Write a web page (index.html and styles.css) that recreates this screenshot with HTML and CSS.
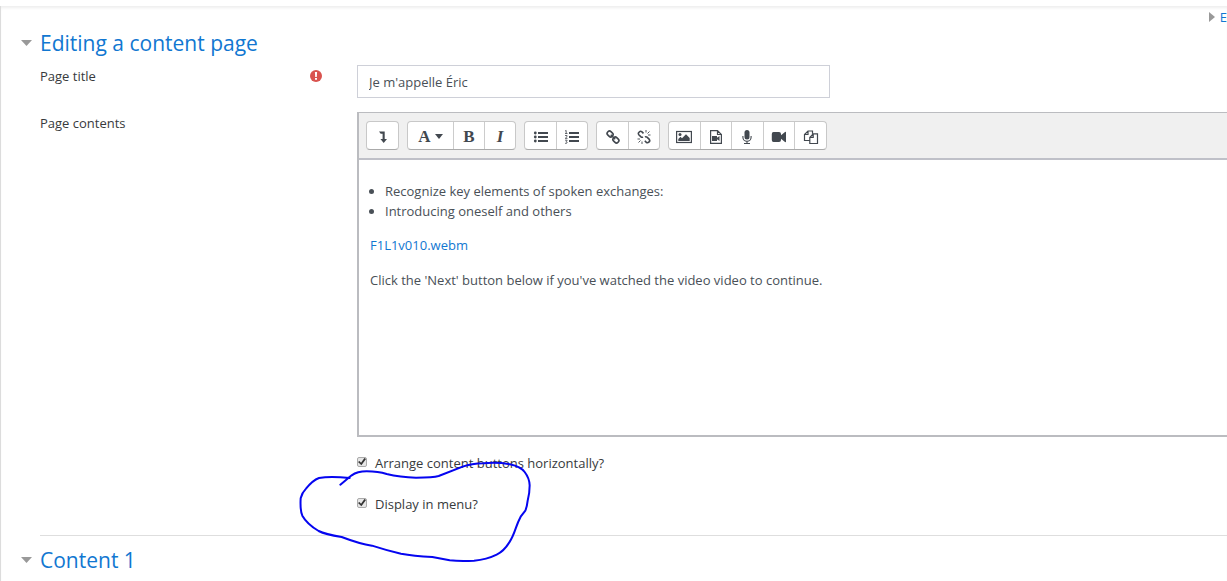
FILE: index.html
```html
<!DOCTYPE html>
<html lang="en">
<head>
<meta charset="utf-8">
<title>Editing a content page</title>
<link rel="stylesheet" href="styles.css">
</head>
<body>
<main class="page">
  <div class="expand"><span class="caret-right"></span><a href="#">E</a></div>
  <form>
    <section class="section">
      <h3 class="legend"><span class="caret-down"></span><a href="#">Editing a content page</a></h3>
      <div class="row">
        <div class="row-label"><label for="title">Page title</label>
          <svg class="required" viewBox="0 0 12 12"><circle cx="6" cy="6" r="6" fill="#d9534f"/><path d="M4.9 2h2.2l-.3 5H5.2zM5 7.9h2v1.9H5z" fill="#fff"/></svg>
        </div>
        <input class="text-input" id="title" type="text" value="Je m'appelle Éric">
      </div>
      <div class="row">
        <div class="row-label">Page contents</div>
        <div class="editor">
          <div class="toolbar">
            <div class="group">
              <button type="button" aria-label="Show more buttons"><svg width="16" height="16" viewBox="0 0 16 16"><path d="M4 2.500H9.700V10H12L8.700 14L5.400 10H7.600V4.700H5.700z" fill="currentColor"/></svg></button>
            </div>
            <div class="group">
              <button type="button" class="styles"><span class="serif">A</span><span class="caret-menu"></span></button>
              <button type="button"><span class="serif">B</span></button>
              <button type="button"><span class="serif italic">I</span></button>
            </div>
            <div class="group">
              <button type="button" aria-label="Unordered list"><svg width="16" height="16" viewBox="0 0 16 16" fill="currentColor"><path d="M5 3h10v2H5zM5 7h10v2H5zM5 11h10v2H5z"/><circle cx="2.300" cy="4" r="1.400"/><circle cx="2.300" cy="8" r="1.400"/><circle cx="2.300" cy="12" r="1.400"/></svg></button>
              <button type="button" aria-label="Ordered list"><svg width="16" height="16" viewBox="0 0 16 16"><path d="M5 3h10v2H5zM5 7h10v2H5zM5 11h10v2H5z" fill="currentColor"/><path d="M1 2L2.200 1.500V4.500M1 4.500H3.500M1 6.500H3V7.700L1.200 9.400H3.500M1 11.200H3.200L2.200 12.500Q3.500 12.700 3 14Q2.300 14.700 1 14.200" fill="none" stroke="currentColor" stroke-width=".8"/></svg></button>
            </div>
            <div class="group">
              <button type="button" aria-label="Link"><svg width="16" height="16" viewBox="0 0 16 16" fill="none" stroke="currentColor" stroke-width="1.600"><rect x="2" y="2.700" width="6.200" height="4.600" rx="2" transform="rotate(45 5.100 5)"/><rect x="7.800" y="8.700" width="6.200" height="4.600" rx="2" transform="rotate(45 10.900 11)"/><path d="M5.800 5.800L10.200 10.200"/></svg></button>
              <button type="button" aria-label="Unlink"><svg width="16" height="16" viewBox="0 0 16 16" fill="none" stroke="currentColor" stroke-width="1.600"><path d="M7.500 4.300L5.700 2.600Q4.500 1.800 3.400 2.800Q1.600 4.300 2.800 5.700L5 7.900Q5.900 8.600 7 8M8.800 11.800L10.500 13.500Q11.700 14.200 12.800 13.200Q14.400 11.800 13.300 10.400L11 8.200Q10 7.400 9 8"/><path d="M10 1v2.500M11.500 4.500l2-2M12 6h2.500M1.500 10H4M2.500 13.500l2-2M6 12.500V15" stroke-width=".9"/></svg></button>
            </div>
            <div class="group wide">
              <button type="button" aria-label="Image"><svg width="16" height="16" viewBox="0 0 16 16"><rect x=".6" y="2.500" width="14.800" height="11" fill="none" stroke="currentColor" stroke-width="1.200"/><circle cx="4" cy="5.500" r="1.500" fill="currentColor"/><path d="M2.300 12V10L4.500 7.800L6 9.300L10 5.300L13.700 9V12z" fill="currentColor"/></svg></button>
              <button type="button" aria-label="Media"><svg width="16" height="16" viewBox="0 0 16 16"><path d="M2.600 1.600H9.500L13.400 5.500V14.400H2.600zM9.500 1.600V5.500H13.400" fill="none" stroke="currentColor" stroke-width="1.200"/><path d="M4 7h5v1.700L11.500 7v5L9 10.300V12H4z" fill="currentColor"/></svg></button>
              <button type="button" aria-label="Record audio"><svg width="16" height="16" viewBox="0 0 16 16"><rect x="5.500" y="1" width="5" height="9.500" rx="2.500" fill="currentColor"/><path d="M3.900 7V8.200A4.100 4.100 0 0 0 12.100 8.200V7M8 12.300V14.500M5 14.500H11" fill="none" stroke="currentColor" stroke-width="1.100"/></svg></button>
              <button type="button" aria-label="Record video"><svg width="16" height="16" viewBox="0 0 16 16" fill="currentColor"><path d="M2.500 3H8Q10 3 10 5V6.300L14 3Q15 2.500 15 3.500V12.500Q15 13.500 14 13L10 9.700V11Q10 13 8 13H2.500Q.8 13 .8 11V5Q.8 3 2.500 3z"/></svg></button>
              <button type="button" aria-label="Manage files"><svg width="16" height="16" viewBox="0 0 16 16" fill="none" stroke="currentColor" stroke-width="1.200"><path d="M6.500 11.500H1.500V5.500L5 2H9.500V4.800M1.500 5.500H5V2M6.800 8.300L10.200 4.800H14.500V14.500H6.800zM6.800 8.300H10.200V4.800"/></svg></button>
            </div>
          </div>
          <div class="content" contenteditable="true" spellcheck="false">
            <ul>
              <li>Recognize key elements of spoken exchanges:</li>
              <li>Introducing oneself and others</li>
            </ul>
            <p><a href="#">F1L1v010.webm</a></p>
            <p>Click the 'Next' button below if you've watched the video video to continue.</p>
          </div>
        </div>
      </div>
      <div class="checks">
        <label><input type="checkbox" checked>Arrange content buttons horizontally?</label>
        <label><input type="checkbox" checked>Display in menu?</label>
        <svg class="ink" viewBox="0 0 1020 483" fill="none" stroke="#0505f0" stroke-width="6" stroke-linecap="round" stroke-linejoin="round"><path d="M151 194L185 166Q202 154 230 154Q265 154 290 162Q330 172 378 173Q430 173 446 168L518 140Q545 131 580 130Q620 126 660 133Q692 140 704 156Q718 174 719 196Q719 220 713 242Q711 260 706 272L692 290Q684 305 678 323Q668 352 658 367Q642 393 620 404Q590 419 552 422Q510 424 479 421L427 411Q370 408 333 401Q285 390 246 377Q210 372 155 351Q105 343 86 333Q51 312 37 287Q30 271 32 235Q36 218 48 206Q68 181 87 174Q120 168 179 174"/></svg>
      </div>
    </section>
    <section class="section">
      <h3 class="legend"><span class="caret-down"></span><a href="#">Content 1</a></h3>
    </section>
  </form>
</main>
</body>
</html>
```
FILE: styles.css
```css
* { box-sizing: border-box; }

body {
  margin: 0;
  padding-top: 6px;
  background: #fff;
  color: #373a3c;
  font: 13px/20px "Open Sans", "Noto Sans", sans-serif;
  overflow: hidden;
}

a { color: #1177d1; text-decoration: none; }

.page {
  min-height: calc(100vh - 6px);
  padding-left: 39px;
  border-left: 1px solid #dcdcdc;
  box-shadow: inset 0 3px 3px -1px #eee;
}

.expand {
  display: flex;
  justify-content: flex-end;
  align-items: center;
  gap: 5px;
  height: 22px;
}

.caret-right {
  border: 5px solid transparent;
  border-left: 6px solid #999;
  border-right: 0;
}

.caret-down {
  width: 11px;
  height: 6px;
  margin-left: -19px;
  margin-right: 8px;
  background: #999;
  clip-path: polygon(0 0, 100% 0, 50% 100%);
}

.legend {
  display: flex;
  align-items: center;
  margin: 0 0 7px;
  font-size: 21px;
  line-height: 30px;
  font-weight: 400;
}

.row {
  display: grid;
  grid-template-columns: 317px 1fr;
  margin-bottom: 14px;
}

.row-label {
  display: flex;
  justify-content: space-between;
  align-items: flex-start;
  padding: 1px 35px 0 0;
}

.required { width: 12px; height: 12px; margin-top: 4px; }

.text-input {
  width: 473px;
  max-width: 100%;
  height: 33px;
  padding: 0 11px;
  border: 1px solid #ced0d8;
  background: #fff;
  color: #495057;
  font: inherit;
}

.editor {
  border: 2px solid #bbbcc0;
  border-top-width: 1px;
  border-right: 0;
}

.toolbar {
  display: flex;
  gap: 8px;
  height: 47px;
  padding: 8px 7px;
  background: #f0f0f0;
  border-bottom: 2px solid #bfc0c8;
}

.group {
  display: flex;
  height: 29px;
  background: #fff;
  border: 1px solid #c8c8c8;
  border-bottom-color: #aaa;
  border-radius: 4px;
}

.group button {
  display: flex;
  align-items: center;
  justify-content: center;
  width: 31px;
  padding: 2px 0 0;
  border: 0;
  background: none;
  color: #42484f;
}

.group button + button { border-left: 1px solid #ccc; }
.group .styles { width: 45px; gap: 4px; }
.wide { width: 159px; }
.wide button { flex: 1; }
.group .serif { font: bold 17px/20px "Liberation Serif", serif; }
.group .italic { font-style: italic; }

.caret-menu {
  border: 4px solid transparent;
  border-top: 5px solid currentColor;
  border-bottom: 0;
}

.content {
  height: 275px;
  padding: 21px 11px;
  color: #495057;
  outline: 0;
}

.content ul { margin: 0 0 14px; padding-left: 15px; }
.content p { margin: 0 0 15px; }

.checks {
  position: relative;
  display: flex;
  flex-direction: column;
  align-items: flex-start;
  gap: 21px;
  padding: 2px 0 21px 317px;
  border-bottom: 1px solid #dedede;
  margin-bottom: 9px;
}

.checks label { display: flex; gap: 8px; }

.checks input {
  appearance: none;
  width: 10px;
  height: 10px;
  margin: 4px 0 0;
  border: 1px solid #aaa;
  border-radius: 2px;
  background: #e6e6e6;
}

.checks input:checked::after {
  content: "";
  display: block;
  width: 8px;
  height: 8px;
  background: #333;
  clip-path: polygon(0 50%, 18% 38%, 38% 58%, 80% 0, 100% 14%, 42% 92%);
}

.ink {
  position: absolute;
  left: 250px;
  top: -31px;
  width: 340px;
  height: 161px;
  pointer-events: none;
}
```
